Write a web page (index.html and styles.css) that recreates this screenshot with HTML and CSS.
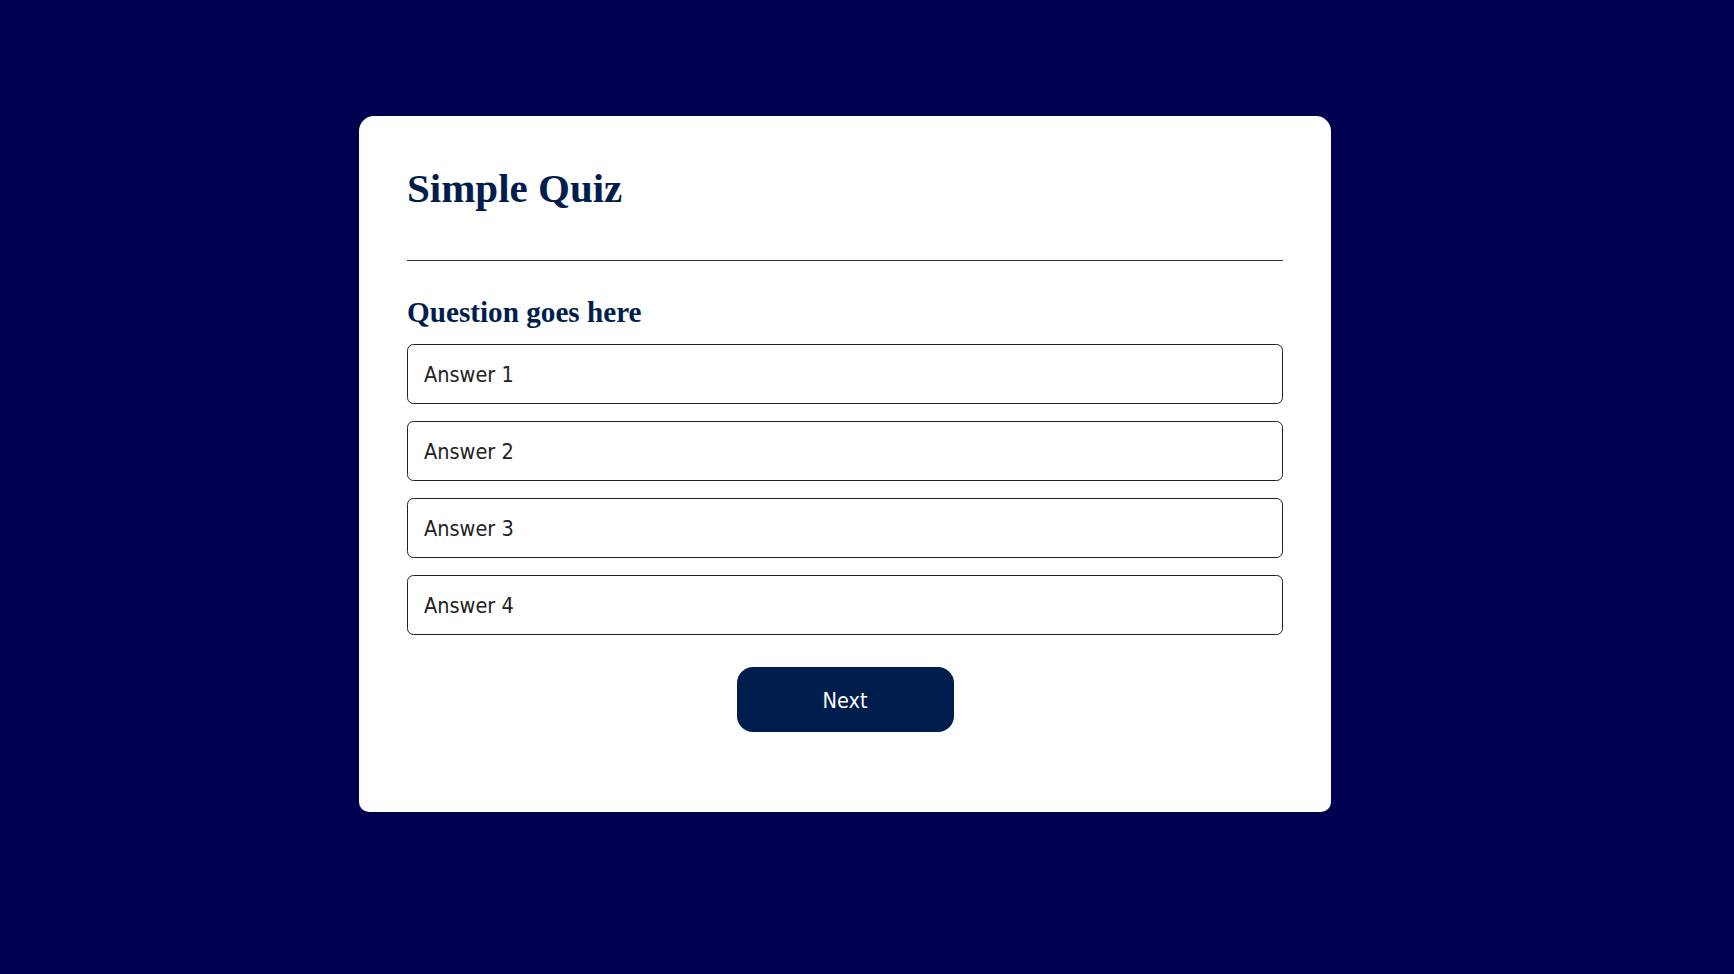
FILE: index.html
```
<!DOCTYPE html>
<html lang="en">
<head>
<meta charset="utf-8">
<title>Simple Quiz</title>
<link rel="stylesheet" href="styles.css">
</head>
<body>
<div class="app">
  <h1 class="title">Simple Quiz</h1>
  <div class="quiz">
    <h2 class="question">Question goes here</h2>
    <div class="answers">
      <button class="answer">Answer 1</button>
      <button class="answer">Answer 2</button>
      <button class="answer">Answer 3</button>
      <button class="answer">Answer 4</button>
    </div>
    <button class="next">Next</button>
  </div>
</div>
</body>
</html>
```
FILE: styles.css
```
* {
  margin: 0;
  padding: 0;
  box-sizing: border-box;
}
body {
  background: #000050;
  font-family: "Liberation Serif", "Times New Roman", serif;
  min-height: 100vh;
}
.app {
  background: #ffffff;
  width: 972px;
  margin: 116px 0 0 359px;
  border-radius: 15px 15px 10px 10px;
  padding: 48px;
}
.title {
  font-size: 41px;
  font-weight: 700;
  color: #001e4d;
  border-bottom: 1px solid #333333;
  padding-bottom: 48px;
}
.quiz {
  padding: 35px 0 32px;
}
.question {
  font-size: 29.2px;
  font-weight: 700;
  color: #001e4d;
}
.answers {
  display: flex;
  flex-direction: column;
  gap: 17px;
  margin-top: 15px;
}
.answer {
  display: block;
  width: 100%;
  background: #ffffff;
  color: #222222;
  font-family: "DejaVu Sans Condensed", "DejaVu Sans", sans-serif;
  font-stretch: condensed;
  font-size: 21.5px;
  text-align: left;
  border: 1px solid #222222;
  border-radius: 6.4px;
  padding: 17px 16px 15px;
  line-height: 26px;
}
.next {
  display: block;
  width: 217px;
  height: 65px;
  margin: 32px auto 0;
  padding-top: 2px;
  background: #001e4d;
  color: #ffffff;
  font-family: "DejaVu Sans Condensed", "DejaVu Sans", sans-serif;
  font-stretch: condensed;
  font-size: 21.5px;
  border: 0;
  border-radius: 16px;
}
```
